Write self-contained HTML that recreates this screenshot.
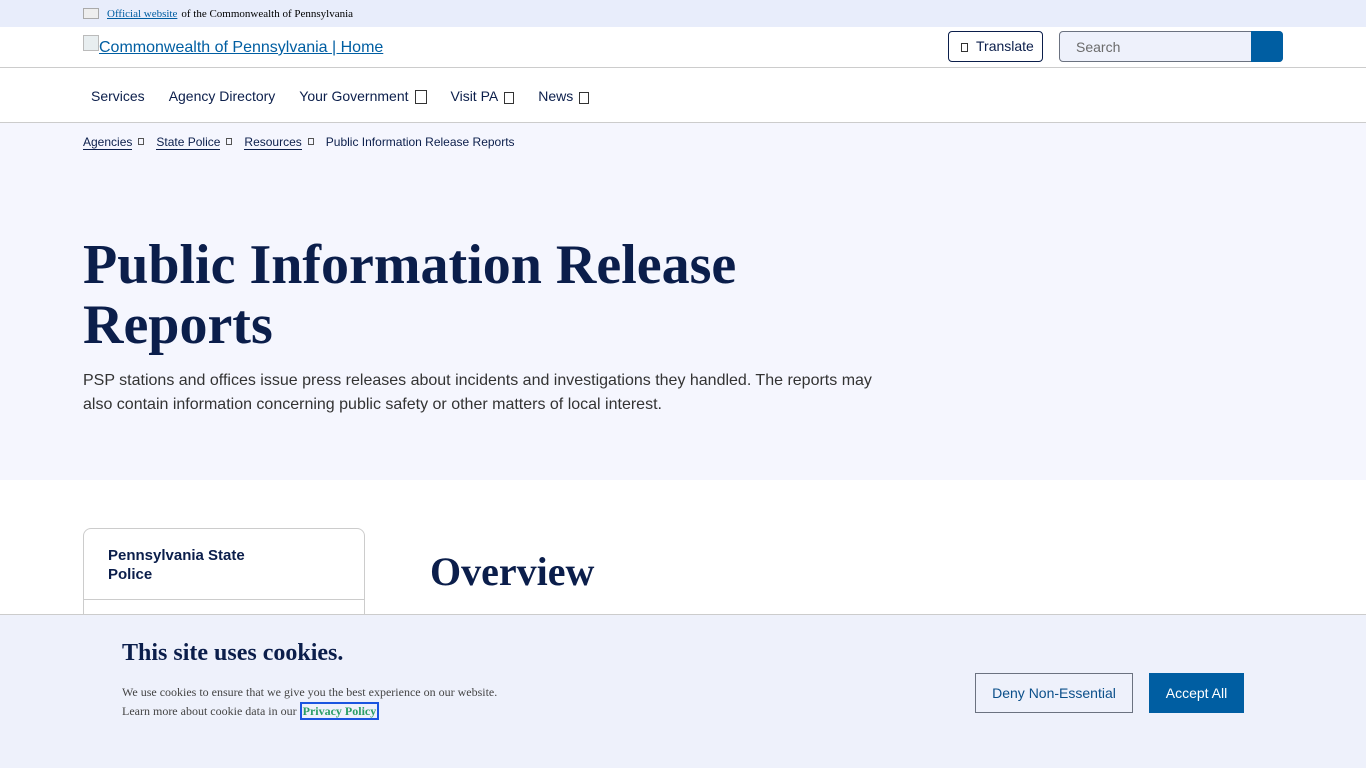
<!DOCTYPE html>
<html><head><meta charset="utf-8"><style>
*{box-sizing:border-box;margin:0;padding:0}
body{width:1366px;height:768px;overflow:hidden;font-family:"Liberation Sans",sans-serif;background:#fff;position:relative;color:#0b1e4b}
.top{height:27px;background:#e8edfb;font-family:"Liberation Serif",serif;font-size:11px;color:#000;padding-left:83px;display:flex;align-items:center}
.top a{color:#005ea2;text-decoration:underline;margin:0 4px 0 8px}
.flag{width:16px;height:11px;border:1px solid #aaa;background:#eee}
.hdr{height:41px;border-bottom:1px solid #ccc;position:relative}
.logo{position:absolute;left:99px;top:12px;font-size:16px;color:#005ea2;text-decoration:underline}
.tr{position:absolute;left:948px;top:4px;width:95px;height:31px;border:1px solid #0b1e4b;border-radius:4px;font-size:14px;color:#0b1e4b;padding:6px 0 0 10px}
.sr{position:absolute;left:1059px;top:4px;width:224px;height:31px;border:1px solid #6b7280;border-radius:4px;background:#eef1fb;font-size:14px;color:#6b6b6b;padding:7px 0 0 16px}
.sb{position:absolute;right:-1px;top:-1px;width:32px;height:31px;background:#005ea2;border-radius:0 4px 4px 0}
.nav{height:55px;border-bottom:1px solid #ccc;display:flex;align-items:center;padding-left:91px;padding-top:2px;font-size:14px;color:#0b1e4b}
.nav span{margin-right:24px}
.bx{display:inline-block;width:12px;height:14px;border:1px solid #333;vertical-align:-3px;margin-left:6px}
.hero{height:357px;background:#f5f6fe;padding-left:83px;position:relative}
.bc{position:absolute;top:12px;left:83px;font-size:12px;color:#0b1e4b}
.bc u{text-decoration:none;border-bottom:1px solid #0b1e4b;margin-right:6px}
.bc i{display:inline-block;width:6px;height:7px;border:1px solid #555;margin-right:12px;vertical-align:1px}
h1{position:absolute;top:112px;left:83px;font-family:"Liberation Serif",serif;font-weight:bold;font-size:56px;line-height:60px;color:#0b1e4b}
.desc{position:absolute;top:246px;left:83px;width:800px;font-size:16px;line-height:24px;color:#333}
.card{position:absolute;left:83px;top:528px;width:282px;height:120px;border:1px solid #ccc;border-radius:8px}
.card b{display:block;padding:17px 24px;font-size:15px;line-height:19px;height:71px;border-bottom:1px solid #ccc}
.ov{position:absolute;left:430px;top:548px;font-family:"Liberation Serif",serif;font-weight:bold;font-size:40px;color:#0b1e4b}
.ck{position:absolute;left:0;top:614px;width:1366px;height:154px;background:#eef1fb;border-top:1px solid #ccc}
.ck h2{position:absolute;left:122px;top:25px;font-family:"Liberation Serif",serif;font-size:24px;color:#0b1e4b}
.ck p{position:absolute;left:122px;top:68px;font-family:"Liberation Serif",serif;font-size:12px;line-height:19px;color:#444}
.ck p a{color:#2a9d66;font-weight:bold;border:2px solid #1a55e0;text-decoration:none;padding:0 1px}
.b1{position:absolute;left:975px;top:58px;width:158px;height:40px;border:1px solid #6b7280;color:#0b4f8a;font-size:14px;text-align:center;line-height:38px}
.b2{position:absolute;left:1149px;top:58px;width:95px;height:40px;background:#005ea2;color:#fff;font-size:14px;text-align:center;line-height:40px}
.img{position:absolute;left:83px;top:8px;width:16px;height:16px;border:1px solid #bbb;background:#e8eef0}
</style></head><body>
<div class="top"><div class="flag"></div><a>Official website</a> of the Commonwealth of Pennsylvania</div>
<div class="hdr"><div class="img"></div><span class="logo">Commonwealth of Pennsylvania | Home</span>
<div class="tr"><span class="bx" style="width:7px;height:9px;margin:0 8px 0 2px;vertical-align:-1px"></span>Translate</div>
<div class="sr">Search<div class="sb"></div></div></div>
<div class="nav"><span>Services</span><span>Agency Directory</span><span>Your Government<span class="bx" style="margin-right:0"></span></span><span>Visit PA<span class="bx" style="width:10px;height:12px;margin-right:0"></span></span><span>News<span class="bx" style="width:10px;height:12px;margin-right:0"></span></span></div>
<div class="hero">
<div class="bc"><u>Agencies</u><i></i><u>State Police</u><i></i><u>Resources</u><i></i>Public Information Release Reports</div>
<h1>Public Information Release<br>Reports</h1>
<div class="desc">PSP stations and offices issue press releases about incidents and investigations they handled. The reports may also contain information concerning public safety or other matters of local interest.</div>
</div>
<div class="card"><b>Pennsylvania State<br>Police</b></div>
<div class="ov">Overview</div>
<div class="ck"><h2>This site uses cookies.</h2>
<p>We use cookies to ensure that we give you the best experience on our website.<br>Learn more about cookie data in our <a>Privacy Policy</a></p>
<div class="b1">Deny Non-Essential</div><div class="b2">Accept All</div></div>
</body></html>
